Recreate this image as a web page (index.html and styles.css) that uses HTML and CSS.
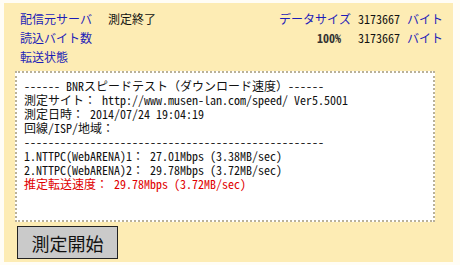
FILE: index.html
```html
<!DOCTYPE html>
<html lang="ja">
<head>
  <meta charset="UTF-8">
  <title>BNRスピードテスト</title>
  <link rel="stylesheet" href="styles.css">
</head>
<body>
  <div class="panel">
    <div class="info">
      <div class="info-left">
        <span class="label">配信元サーバ</span><span class="value">測定終了</span>
        <span class="label">読込バイト数</span><span class="value"></span>
        <span class="label">転送状態</span><span class="value"></span>
      </div>
      <div class="info-right">
        <span class="label">データサイズ</span><span class="num">3173667</span><span class="label">バイト</span>
        <span class="percent">100%</span><span class="num">3173667</span><span class="label">バイト</span>
      </div>
    </div>

    <pre class="result">------ BNRスピードテスト（ダウンロード速度）------
測定サイト： http://www.musen-lan.com/speed/ Ver5.5001
測定日時： 2014/07/24 19:04:19
回線/ISP/地域：
--------------------------------------------------
1.NTTPC(WebARENA)1： 27.01Mbps (3.38MB/sec)
2.NTTPC(WebARENA)2： 29.78Mbps (3.72MB/sec)
<span class="estimate">推定転送速度： 29.78Mbps (3.72MB/sec)</span></pre>

    <button class="start" type="button">測定開始</button>
  </div>
</body>
</html>
```

FILE: styles.css
```css
* {
  margin: 0;
  padding: 0;
  box-sizing: border-box;
}
body {
  background: #fffdf6;
  font-family: "Noto Sans Mono CJK JP", "Noto Sans CJK JP", monospace;
  font-size: 12px;
  color: #111;
}
.panel {
  margin: 3px 7px 3px 4px;
  height: 259px;
  background: #fdecb4;
  padding: 6px 0 0 11px;
}
.info {
  display: flex;
  justify-content: space-between;
  padding-left: 5px;
  margin-right: 10px;
  height: 62px;
}
.info-left {
  display: grid;
  grid-template-columns: 88px auto;
  grid-auto-rows: 19px;
  align-items: center;
}
.info-right {
  display: grid;
  grid-template-columns: auto auto auto;
  grid-auto-rows: 19px;
  align-items: center;
  column-gap: 7px;
}
.label {
  color: #1d1db8;
}
.percent {
  font-weight: bold;
  color: #333;
  text-align: right;
  padding-right: 10px;
}
.result {
  width: 420px;
  height: 151px;
  background: #fff;
  border: 2px dotted #b9b199;
  padding: 6px 7px;
  font-family: "Noto Sans Mono CJK JP", "Noto Sans CJK JP", monospace;
  font-size: 12px;
  line-height: 14px;
  color: #111;
}
.estimate {
  color: #e00000;
}
.start {
  margin: 4px 0 0 2px;
  width: 101px;
  height: 33px;
  background: #cacaca;
  border: 1px solid #222;
  font-family: "Noto Sans Mono CJK JP", "Noto Sans CJK JP", sans-serif;
  font-size: 18px;
  color: #111;
}
```
